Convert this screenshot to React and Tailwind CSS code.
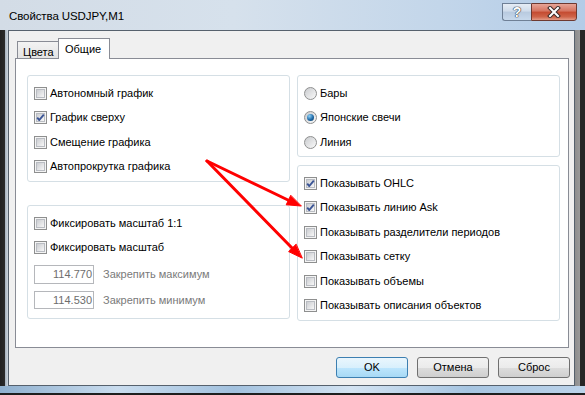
import React from "react";

function Checkbox({ checked }) {
  return (
    <span className="relative flex h-[13px] w-[13px] shrink-0 border border-[#8e8f8f] bg-[#f4f4f4] p-px">
      <span className="block h-full w-full border border-[#b9bcc2] bg-[linear-gradient(135deg,#cbcdd1,#f7f7f7)]" />
      {checked && (
        <svg className="absolute left-0 top-0" width="11" height="11" viewBox="0 0 11 11">
          <path d="M2.2 5.6 L4.3 8 L8.8 2.6" fill="none" stroke="#3b5596" strokeWidth="1.9" strokeLinejoin="round" />
        </svg>
      )}
    </span>
  );
}

function Radio({ checked }) {
  return (
    <span className="flex h-[13px] w-[13px] shrink-0 items-center justify-center rounded-full border border-[#8e8f8f] bg-[linear-gradient(135deg,#c9cbce,#fafafa)]">
      {checked && (
        <span className="h-[7px] w-[7px] rounded-full bg-[radial-gradient(circle_at_35%_30%,#8fd2f8,#1f6aa8_55%,#0b3558)]" />
      )}
    </span>
  );
}

function CheckRow({ label, checked }) {
  return (
    <div className="flex h-[24.5px] items-center gap-[3px]">
      <Checkbox checked={checked} />
      <span className="leading-[13px]">{label}</span>
    </div>
  );
}

function RadioRow({ label, checked }) {
  return (
    <div className="flex h-[24.5px] items-center gap-[3px]">
      <Radio checked={checked} />
      <span className="leading-[13px]">{label}</span>
    </div>
  );
}

function InputRow({ value, label, className }) {
  return (
    <div className={"flex items-center " + className}>
      <div className="flex h-full w-[60px] items-center justify-end border border-[#b5b7bb] bg-white pr-[1px] text-[#6d6d6d]">
        {value}
      </div>
      <span className="ml-[9px] text-[#7a7a7a]">{label}</span>
    </div>
  );
}

function Group({ className, children }) {
  return (
    <div className={"rounded-[3px] border border-[#d5dfe5] pl-[6px] pt-[5px] " + className}>{children}</div>
  );
}

function WinButton({ children, primary }) {
  return (
    <div
      className={
        "flex h-[21px] w-[72px] items-center justify-center rounded-[3px] border " +
        (primary
          ? "border-[#3c7fb1] bg-[linear-gradient(#eaf6fd_0%,#d9f0fc_50%,#bee6fd_50%,#a7d9f5_100%)]"
          : "border-[#707070] bg-[linear-gradient(#f2f2f2_0%,#ebebeb_50%,#dddddd_50%,#cfcfcf_100%)]")
      }
    >
      {children}
    </div>
  );
}

export default function App() {
  return (
    <div className="relative flex h-[395px] w-[585px] flex-col overflow-hidden bg-[#1e1e1e] font-['Liberation_Sans',Arial,sans-serif] text-[11px] text-black">
      {/* Title bar */}
      <div className="flex h-[30px] shrink-0 items-start bg-[linear-gradient(90deg,#d3dce6,#d6e1ec_40%,#c3d6ea_75%,#b3cce7)]">
        <div className="pl-[9px] pt-[9px] text-[11.5px] leading-[14px] tracking-[-0.1px] text-black">Свойства USDJPY,M1</div>
        <div className="ml-auto mr-[8px] mt-[3px] flex">
          <div className="flex h-[18px] w-[29px] items-center justify-center rounded-bl-[3px] border border-r-0 border-[#6f8096] bg-[linear-gradient(#e6edf5,#cfdceb_45%,#b8cadf_50%,#c8d9ec)] text-[14px] font-bold leading-none text-white [text-shadow:0_0_1px_#2b3340,0_0_1px_#2b3340,0_0_1px_#2b3340]">
            ?
          </div>
          <div className="flex h-[18px] w-[46px] items-center justify-center rounded-br-[3px] border border-[#6e3a31] bg-[linear-gradient(#e7a597,#d5735f_45%,#c44a30_50%,#cf6449_80%,#e39b88)]">
            <svg width="14" height="12" viewBox="0 0 14 12">
              <path d="M3 2 L11 10 M11 2 L3 10" stroke="#3a2a28" strokeWidth="4" strokeLinecap="square" />
              <path d="M3 2 L11 10 M11 2 L3 10" stroke="#ffffff" strokeWidth="2" strokeLinecap="square" />
            </svg>
          </div>
        </div>
      </div>

      {/* Body */}
      <div className="flex h-[356px] shrink-0">
        <div className="w-[8px] bg-[linear-gradient(90deg,#202020_0,#2a2a2a_5px,#a3afbb_5px,#cdd6df_8px)]" />
        <div className="flex w-[567px] flex-col border border-[#56616d] bg-[#f0f0f0]">
          <div className="flex flex-col pl-[6px] pr-[5px] pt-[7px]">
            {/* tabs */}
            <div className="flex h-[21px] items-end pl-[2px]">
              <div className="flex h-[18px] w-[42px] items-start border border-b-0 border-[#898c95] bg-[linear-gradient(#f3f3f3,#e3e3e3)] pl-[5px] pt-[4px] leading-[13px]">
                Цвета
              </div>
              <div className="relative z-10 -ml-px flex h-[21px] w-[52px] items-start border border-b-0 border-[#898c95] bg-white pl-[6px] pt-[4px] leading-[13px]">
                Общие
              </div>
            </div>
            {/* panel */}
            <div className="-mt-px flex h-[290px] border border-[#898c95] bg-white pl-[11px] pr-[8px] pt-[16px]">
              <div className="flex w-[263px] flex-col">
                <Group className="h-[107px]">
                  <CheckRow label="Автономный график" />
                  <CheckRow label="График сверху" checked />
                  <CheckRow label="Смещение графика" />
                  <CheckRow label="Автопрокрутка графика" />
                </Group>
                <Group className="mt-[23px] h-[114px]">
                  <CheckRow label="Фиксировать масштаб 1:1" />
                  <CheckRow label="Фиксировать масштаб" />
                  <InputRow className="mt-[5px] h-[19px]" value="114.770" label="Закрепить максимум" />
                  <InputRow className="mt-[7px] h-[18px]" value="114.530" label="Закрепить минимум" />
                </Group>
              </div>
              <div className="ml-[7px] flex w-[263px] flex-col">
                <Group className="h-[82px]">
                  <RadioRow label="Бары" />
                  <RadioRow label="Японские свечи" checked />
                  <RadioRow label="Линия" />
                </Group>
                <Group className="mt-[8px] h-[156px]">
                  <CheckRow label="Показывать OHLC" checked />
                  <CheckRow label="Показывать линию Ask" checked />
                  <CheckRow label="Показывать разделители периодов" />
                  <CheckRow label="Показывать сетку" />
                  <CheckRow label="Показывать объемы" />
                  <CheckRow label="Показывать описания объектов" />
                </Group>
              </div>
            </div>
          </div>
          {/* buttons */}
          <div className="mt-[9px] flex justify-end gap-[9px] pr-[4px]">
            <WinButton primary>OK</WinButton>
            <WinButton>Отмена</WinButton>
            <WinButton>Сброс</WinButton>
          </div>
        </div>
        <div className="w-[10px] bg-[linear-gradient(90deg,#8e8e8e_0,#9a9a9a_5px,#262626_5px)]" />
      </div>

      {/* Bottom frame */}
      <div className="h-[7px] shrink-0 bg-[linear-gradient(90deg,#8fb0cf,#c9dcee_20%,#a2c1de_40%,#d3e3f2_60%,#a7c5e1_80%,#bcd3ea)]" />

      {/* Red arrows overlay */}
      <svg className="pointer-events-none absolute left-0 top-0" width="585" height="395" viewBox="0 0 585 395">
        <g fill="#ff0000" stroke="#ff0000" strokeLinecap="round">
          <line x1="207" y1="161" x2="289" y2="200.5" strokeWidth="3" />
          <polygon points="301,206 286.2,204.8 290.6,195.6" strokeWidth="1" strokeLinejoin="round" />
          <line x1="207" y1="161" x2="292.5" y2="248.5" strokeWidth="3" />
          <polygon points="302,258 288.6,251.6 295.9,244.4" strokeWidth="1" strokeLinejoin="round" />
        </g>
      </svg>
    </div>
  );
}
